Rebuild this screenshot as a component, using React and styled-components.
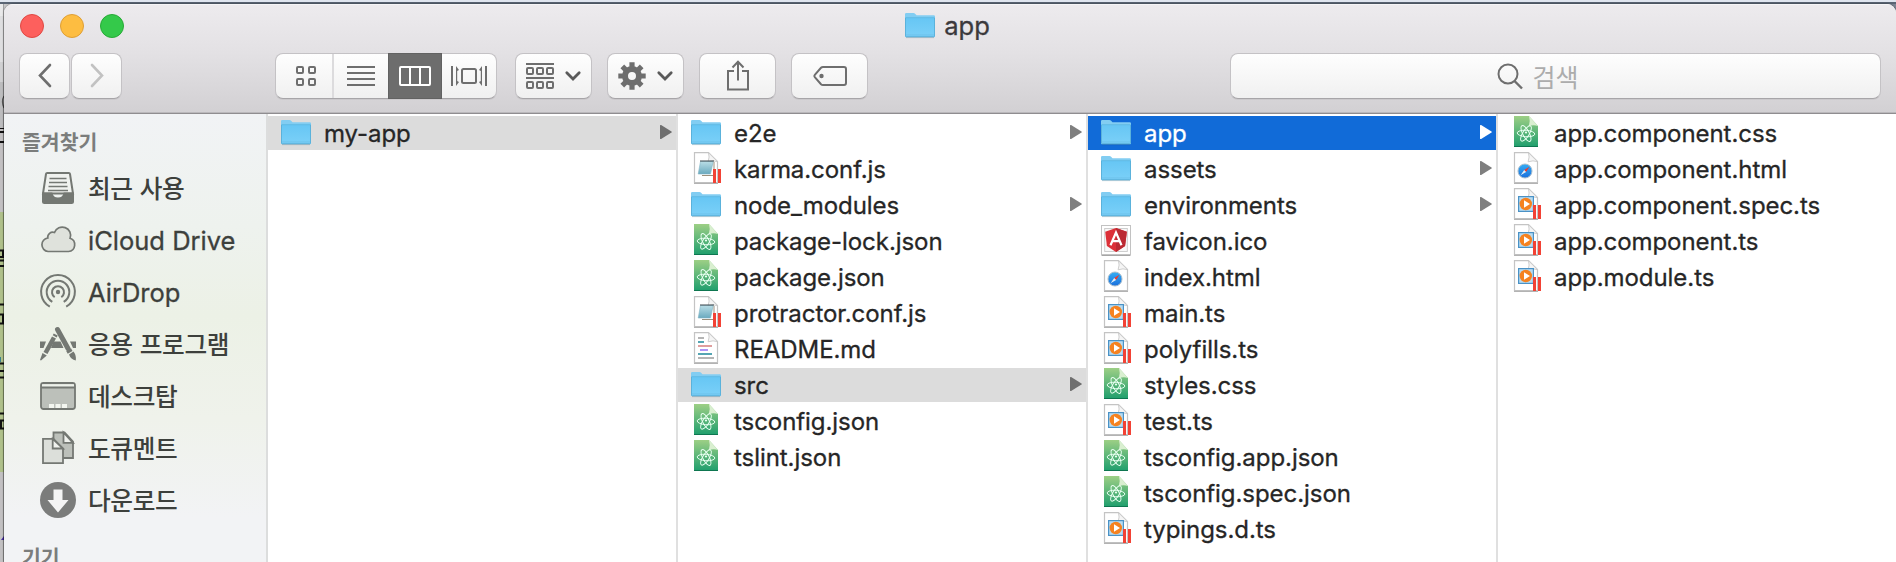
import React from 'react';
import styled, { createGlobalStyle, css } from 'styled-components';

const GlobalStyle = createGlobalStyle`
  *, *::before, *::after { box-sizing: border-box; }
  html, body { margin: 0; height: 100%; overflow: hidden; }
  body { font-family: Inter, "Noto Sans CJK KR", sans-serif; background: #5a6574; }
  #root { height: 100%; }
  svg { display: block; flex: none; overflow: visible; }
`;

const Desktop = styled.div`
  display: flex;
  flex-direction: column;
  height: 562px;
  overflow: hidden;
  background: #5a6574;
`;

const MenuEdge = styled.div`
  flex: none;
  height: 4px;
  background: #dfe5ef;
  border-bottom: 2px solid #5a6574;
`;

const Stage = styled.div`
  display: flex;
  flex: 1;
  min-height: 0;
  background: linear-gradient(to right, #c9c9cb 0 40px, #7b8594 40px);
`;

const Behind = styled.div`
  flex: none;
  width: 4px;
`;

const Window = styled.main`
  display: flex;
  flex: 1;
  flex-direction: column;
  min-width: 0;
  overflow: hidden;
  border-radius: 9px 9px 0 0;
  background: #fff;
  box-shadow: 0 0 2px rgba(0, 0, 0, 0.6);
`;

const Chrome = styled.header`
  display: flex;
  flex-direction: column;
  flex: none;
  height: 110px;
  background: linear-gradient(#edebee, #e3e1e4 45%, #d2d0d3);
  border-bottom: 1px solid #8f8d90;
  box-shadow: inset 0 1px 0 #f6f5f7, inset 0 -1px 0 #bab8bb;
`;

const TitleBar = styled.div`
  display: grid;
  grid-template-columns: 1fr auto 1fr;
  align-items: center;
  height: 49px;
  padding: 0 3px 5px 16px;
`;

const Lights = styled.div`
  display: flex;
  gap: 16px;
`;

const Light = styled.span`
  width: 24px;
  height: 24px;
  border-radius: 50%;
  background: ${(p) => p.$fill};
  border: 1px solid ${(p) => p.$edge};
`;

const Title = styled.h1`
  display: flex;
  align-items: center;
  gap: 9px;
  margin: 0 18px 0 0;
  font-size: 25.6px;
  font-weight: 400;
  line-height: 30px;
  color: #3b393c;
  -webkit-text-stroke: 0.3px;
`;

const Tools = styled.div`
  display: flex;
  height: 46px;
  padding: 0 15px;
`;

const key = css`
  display: flex;
  align-items: center;
  justify-content: center;
  height: 46px;
  border: 1px solid #c4c2c5;
  border-bottom-color: #a7a5a8;
  border-radius: 8px;
  background: linear-gradient(#fefefe, #f0f0f0);
  box-shadow: 0 1px 0 rgba(0, 0, 0, 0.05);
  padding: 0;
`;

const Key = styled.button`
  ${key}
  flex: none;
  width: ${(p) => p.$w}px;
  margin-right: ${(p) => p.$after}px;
  gap: ${(p) => p.$gap || 0}px;
`;

const Segments = styled.div`
  ${key}
  flex: none;
  width: 222px;
  margin-right: 18px;
  align-items: stretch;
  justify-content: flex-start;
`;

const Segment = styled.button`
  display: flex;
  align-items: center;
  justify-content: center;
  width: ${(p) => p.$w}px;
  padding: 0;
  border: 0;
  background: none;
  ${(p) => p.$divided && css`
    padding-left: 4px;
    border-right: 2px solid #dcdbdd;
  `}
  ${(p) => p.$on && css`
    margin: -1px 0;
    background: #6d6d6d;
    box-shadow: inset 0 0 0 1px #626262;
  `}
`;

const Search = styled.div`
  ${key}
  width: 651px;
  margin-left: auto;
  gap: 9px;
  padding-right: 35px;
  font-size: 25px;
  color: #acacac;
`;

const Body = styled.div`
  display: flex;
  flex: 1;
  min-height: 0;
`;

const Sidebar = styled.nav`
  flex: none;
  width: 264px;
  border-right: 2px solid #dcdddd;
  background: linear-gradient(#f1f3f5, #eef2ee 25%, #ecf1e6 45%, #eff2eb 68%, #f2f3f5 90%);
`;

const Heading = styled.h2`
  height: 48px;
  margin: 0;
  padding: ${(p) => (p.$later ? 12 : 9)}px 0 0 18px;
  font: 700 20.5px/36px "Noto Sans CJK KR", sans-serif;
  color: #7b7d7c;
  white-space: nowrap;
`;

const Place = styled.div`
  display: flex;
  align-items: center;
  gap: 12px;
  height: 52px;
  padding-left: 36px;
  white-space: nowrap;
  color: #3d403c;
  font-family: ${(p) => (p.$latin ? 'Inter' : '"Noto Sans CJK KR"')}, sans-serif;
  font-size: ${(p) => (p.$latin ? 25.5 : 24.7)}px;
  font-weight: ${(p) => (p.$latin ? 400 : 500)};
  line-height: 36px;
  ${(p) => (p.$latin ? css`-webkit-text-stroke: 0.3px;` : css`
    letter-spacing: -0.4px;
    word-spacing: 2px;
  `)}
  svg { color: #747873; }
`;

const PlaceName = styled.span`
  padding: ${(p) => (p.$latin ? '2px 0 0' : '0 0 2px')};
`;

const Column = styled.section`
  display: flex;
  flex-direction: column;
  gap: 2px;
  flex: none;
  width: 410px;
  padding-top: 2px;
  border-right: 2px solid #e0e0e0;
  &:last-child { flex: 1; border-right: 0; }
`;

const Row = styled.div`
  display: flex;
  flex: none;
  height: 34px;
  padding: 0 4px 0 13px;
  color: ${(p) => (p.$tone === 'active' ? '#fff' : '#262626')};
  background: ${(p) => ({ active: '#116bd8', trail: '#dcdcdc' }[p.$tone] || 'transparent')};
`;

const FileName = styled.span`
  flex: 1;
  padding: 0 0 0 13px;
  font-size: 24px;
  line-height: 35px;
  letter-spacing: -0.06px;
  white-space: nowrap;
  -webkit-text-stroke: 0.3px;
`;

function Folder() {
  return (
    <svg width="30" height="34" viewBox="0 0 30 34">
      <path d="M1 28.6h28" stroke="#000" strokeOpacity=".22" strokeWidth="1" />
      <path d="M0 5.2Q0 4 1.2 4h7.2q1 0 1.7.8l1.4 1.5h17.2q1.3 0 1.3 1.3V9H0z" fill="#82cdf2" />
      <path d="M0 8.6h30v18.6q0 1-1 1H1q-1 0-1-1z" fill="url(#folderFace)" />
      <path d="M.5 8.7h29" stroke="#60b7df" strokeWidth=".8" />
      <path d="M.5 9v18q0 .7.7.7h27.6q.7 0 .7-.7V9" fill="none" stroke="#58afd8" strokeWidth=".9" />
      <path d="M1 26h28" stroke="#66bbe3" strokeWidth=".6" />
    </svg>
  );
}

function Page() {
  return (
    <>
      <path d="M3.500.6h14l9 9v21h-23z" fill="#fff" stroke="#c4c4c4" strokeWidth="1.200" />
      <path d="M3 31.400h24" stroke="#999" strokeWidth=".8" />
      <path d="M17.500.8q1.400 4-.4 9 5-1.800 9.400-.2z" fill="#f5f5f5" stroke="#c8c8c8" strokeWidth=".9" />
    </>
  );
}

function Bars() {
  return <path d="M22 17h3v14h-3zM27 17h3v14h-3z" fill="#f24235" />;
}

function Atom() {
  return (
    <svg width="30" height="34" viewBox="0 0 30 34">
      <path d="M3 0h15l9 10v21H3z" fill="url(#leaf)" />
      <path d="M3 30.500h24" stroke="#0e7650" strokeWidth="1" />
      <path d="M18 0q1.600 5-.2 10.200 4.800-1.700 9.200-.2z" fill="#d9efd0" />
      <g fill="none" stroke="#e9fff2" strokeWidth=".95">
        <ellipse cx="15" cy="17.500" rx="8.800" ry="3.200" transform="rotate(4 15 17.500)" />
        <ellipse cx="15" cy="17.500" rx="8.800" ry="3.200" transform="rotate(62 15 17.500)" />
        <ellipse cx="15" cy="17.500" rx="8.800" ry="3.200" transform="rotate(-58 15 17.500)" />
      </g>
      <circle cx="15" cy="16.500" r="1.100" fill="#e9fff2" />
    </svg>
  );
}

function Script() {
  return (
    <svg width="30" height="34" viewBox="0 0 30 34">
      <Page />
      <path d="M11 23.500h12V10" fill="none" stroke="#9b8f7c" strokeWidth="1" />
      <path d="M9.500 9.500h12.700L19.500 22H7.200z" fill="url(#pad)" stroke="#7fb3c4" strokeWidth=".6" />
      <path d="M9.500 9h13" stroke="#38454a" strokeWidth="2" strokeDasharray="1 1" />
      <Bars />
    </svg>
  );
}

function Media() {
  return (
    <svg width="30" height="34" viewBox="0 0 30 34">
      <Page />
      <rect x="7.600" y="8.600" width="14.800" height="14.800" fill="#b7dcf3" stroke="#4a92c6" strokeWidth="1.200" />
      <circle cx="14.800" cy="16" r="6.200" fill="#f58220" />
      <path d="M13 12.200l6 3.800-6 3.800z" fill="#fff" />
      <Bars />
    </svg>
  );
}

function Web() {
  return (
    <svg width="30" height="34" viewBox="0 0 30 34">
      <Page />
      <circle cx="14" cy="19" r="7" fill="url(#sea)" stroke="#a9bccb" strokeWidth="1" />
      <path d="M18.400 14.800l-3.300 5.200-1.900-1.900z" fill="#f0392c" />
      <path d="M9.600 23.200l3.600-5.100 1.900 1.900z" fill="#e6eef5" />
    </svg>
  );
}

function Shield() {
  return (
    <svg width="30" height="34" viewBox="0 0 30 34">
      <path d="M.5 31.300h29" stroke="#000" strokeOpacity=".35" strokeWidth="1.400" />
      <rect x=".5" y="1.500" width="29" height="29" fill="#fff" stroke="#c2c2c2" />
      <rect x="3.700" y="4.500" width="22.600" height="23" fill="#f8f8f8" stroke="#c9c9c9" strokeWidth=".9" />
      <path d="M15 4l10.800 3.700-1.700 14.400L15 28l-9.100-5.900L4.200 7.700z" fill="#dc3038" />
      <path d="M15 4l10.800 3.700-1.700 14.400L15 28z" fill="#bb2a33" />
      <path d="M9.500 21.300L15 8.500l5.500 12.800M11.700 17.200h6.600" fill="none" stroke="#fff" strokeWidth="2.200" />
    </svg>
  );
}

function Markdown() {
  return (
    <svg width="30" height="34" viewBox="0 0 30 34">
      <Page />
      <g strokeWidth="1.800" fill="none">
        <path d="M7 6h6M7 26h16" stroke="#b4b4b4" />
        <path d="M7 10h6M7 22h14" stroke="#55a5b3" />
        <path d="M7 14h14" stroke="#dc9494" />
        <path d="M9 18h8" stroke="#a688f5" />
      </g>
    </svg>
  );
}

function Ramp({ id, from, to }) {
  return (
    <linearGradient id={id} x1="0" y1="0" x2="0" y2="1">
      <stop offset="0" stopColor={from} />
      <stop offset="1" stopColor={to} />
    </linearGradient>
  );
}

const fileIcons = { folder: Folder, atom: Atom, js: Script, ts: Media, html: Web, ico: Shield, md: Markdown };

function Arrow({ tone }) {
  const fill = { active: '#fff', trail: '#6f6f6f' }[tone] || '#7f7f7f';
  return (
    <svg width="12" height="34" viewBox="0 0 12 34">
      <path d="M0 9.800Q0 8.600 1.100 9.100L11.500 15.500Q12.300 16 11.500 16.500L1.100 22.900Q0 23.400 0 22.200z" fill={fill} />
    </svg>
  );
}

const columns = [
  [['folder', 'my-app', 'trail']],
  [
    ['folder', 'e2e'], ['js', 'karma.conf.js'], ['folder', 'node_modules'], ['atom', 'package-lock.json'],
    ['atom', 'package.json'], ['js', 'protractor.conf.js'], ['md', 'README.md'], ['folder', 'src', 'trail'],
    ['atom', 'tsconfig.json'], ['atom', 'tslint.json'],
  ],
  [
    ['folder', 'app', 'active'], ['folder', 'assets'], ['folder', 'environments'], ['ico', 'favicon.ico'],
    ['html', 'index.html'], ['ts', 'main.ts'], ['ts', 'polyfills.ts'], ['atom', 'styles.css'], ['ts', 'test.ts'],
    ['atom', 'tsconfig.app.json'], ['atom', 'tsconfig.spec.json'], ['ts', 'typings.d.ts'],
  ],
  [
    ['atom', 'app.component.css'], ['html', 'app.component.html'], ['ts', 'app.component.spec.ts'],
    ['ts', 'app.component.ts'], ['ts', 'app.module.ts'],
  ],
];

const Icon36 = ({ children }) => (
  <svg width="36" height="36" viewBox="0 0 36 36" fill="none" stroke="currentColor" strokeWidth="2">{children}</svg>
);

const places = [
  ['최근 사용', (
    <Icon36>
      <path d="M7.200 3h21.600q1 0 1.200 1l3 19.500H3L6 4q.2-1 1.200-1z" fill="#f0f2ef" />
      <path d="M9.500 8.500h17M9 12.500h18M8.500 16.500h19M8 20.500h20" strokeWidth="1.500" />
      <path d="M3 23.500h8.500q1 5 6.500 5t6.500-5H33v8q0 1.500-1.500 1.500h-27Q3 33 3 31.500z" fill="currentColor" />
    </Icon36>
  )],
  ['iCloud Drive', (
    <Icon36>
      <path d="M8 29.500h20.500a6.800 6.800 0 0 0 1.600-13.200A8.200 8.200 0 0 0 14.500 10.500 5 5 0 0 0 7.800 16 6.800 6.800 0 0 0 8 29.500z" fill="#dfe2dc" strokeWidth="1.700" />
    </Icon36>
  ), true],
  ['AirDrop', (
    <Icon36>
      <circle cx="18" cy="18" r="2.200" fill="currentColor" stroke="none" />
      <path d="M14.700 23.200a6 6 0 1 1 6.600 0" />
      <path d="M12.300 27.800a11.300 11.300 0 1 1 11.400 0" />
      <path d="M9.800 32.600a16.900 16.900 0 1 1 16.400 0" />
    </Icon36>
  ), true],
  ['응용 프로그램', (
    <Icon36>
      <path d="M0 15.500h6L3.500 22H0zM13.500 15.500h7L23.500 22H11zM30 15.500h6V22h-3z" fill="currentColor" stroke="none" />
      <path d="M17.500 3.500L28 22.500" strokeWidth="5" strokeLinecap="round" />
      <path d="M28.600 23.700l1.500 2.700" strokeWidth="5.500" />
      <path d="M29 28.500l4.500-3q3 4 2.300 9-5-.8-6.800-6z" fill="currentColor" stroke="none" />
      <path d="M14 11.500L5.500 27" strokeWidth="4.500" />
      <path d="M15.700 8.500l-1 1.800" strokeWidth="4.500" />
      <path d="M2.500 27l4.300 2.500L1 34.500 0 34z" fill="currentColor" stroke="none" />
    </Icon36>
  )],
  ['데스크탑', (
    <Icon36>
      <rect x="1" y="5" width="34" height="26" rx="2.500" fill="#bcc0ba" strokeWidth="1.800" />
      <path d="M2 6.200h32v3H2z" fill="#edf1ea" stroke="none" />
      <path d="M1 9.500h34" strokeWidth="1.800" />
      <path d="M9 26h5v4H9zM15.500 26h5v4h-5zM22 26h5v4h-5z" fill="#f3f6f0" stroke="none" />
    </Icon36>
  )],
  ['도큐멘트', (
    <Icon36>
      <path d="M13.500 2.500h11l8.500 9v16.500H13.500z" fill="#bcc0ba" strokeWidth="1.800" />
      <path d="M23.500 2.500v10.300H33z" fill="#f0f2ee" strokeWidth="1.800" />
      <path d="M3 8.800h10.500l9.500 9.700v14.700H3z" fill="#dcdfda" strokeWidth="1.800" />
      <path d="M12.700 8.800v9.700H23z" fill="#f0f2ee" strokeWidth="1.800" />
    </Icon36>
  )],
  ['다운로드', (
    <Icon36>
      <circle cx="18" cy="18" r="18" fill="#7b7c7b" stroke="none" />
      <path d="M13.500 7.500h9v10.500h6L18 30.500 7.500 18h6z" fill="#f4f4f4" stroke="none" />
    </Icon36>
  )],
];

const Glyph = ({ w, h = 32, children, ...rest }) => (
  <svg width={w} height={h} viewBox={`0 0 ${w} ${h}`} fill="none" stroke="#6e6e6e" strokeWidth="2" {...rest}>{children}</svg>
);

const Caret = () => (
  <Glyph w={16} strokeWidth={2.8} stroke="#5a5a5a" strokeLinecap="round">
    <path d="M1.800 12.800L8 19l6.200-6.200" />
  </Glyph>
);

function Toolbar() {
  return (
    <Tools>
      <Key $w={51} $after={1}>
        <Glyph w={16} strokeWidth={2.6} strokeLinecap="round"><path d="M13 5L3 15.500 13 26" /></Glyph>
      </Key>
      <Key $w={51} $after={153}>
        <Glyph w={16} stroke="#c2c2c2" strokeWidth={2.6} strokeLinecap="round"><path d="M3 5l10 10.500L3 26" /></Glyph>
      </Key>
      <Segments>
        <Segment $w={58} $divided>
          <Glyph w={20}>
            {[[1, 7], [13, 7], [1, 19], [13, 19]].map(([x, y]) => <rect key={`${x}-${y}`} x={x} y={y} width="6" height="6" rx="1" />)}
          </Glyph>
        </Segment>
        <Segment $w={54}>
          <Glyph w={28}><path d="M0 7h28M0 13h28M0 19h28M0 25h28" /></Glyph>
        </Segment>
        <Segment $w={54} $on>
          <Glyph w={32} stroke="#fff"><rect x="1" y="7" width="30" height="18" rx="1" /><path d="M11 7v18M21 7v18" /></Glyph>
        </Segment>
        <Segment $w={54}>
          <Glyph w={36}>
            <rect x="11" y="9" width="14" height="14" rx="1.500" />
            <path d="M1 6v20M35 6v20" />
            <path d="M5 6l3 4-1.800 1v10L8 22l-3 4zM31 6l-3 4 1.800 1v10L28 22l3 4z" fill="#6e6e6e" stroke="none" />
          </Glyph>
        </Segment>
      </Segments>
      <Key $w={77} $after={15} $gap={11}>
        <Glyph w={28}>
          <path d="M0 4h28M0 18h28" />
          {[1, 11, 21].map((x) => (
            <React.Fragment key={x}>
              <rect x={x} y="8" width="6" height="6" rx="1" />
              <rect x={x} y="22" width="6" height="6" rx="1" />
            </React.Fragment>
          ))}
        </Glyph>
        <Caret />
      </Key>
      <Key $w={77} $after={15} $gap={11}>
        <Glyph w={28} stroke="none">
          <path
            fill="#6e6e6e"
            fillRule="evenodd"
            d="M14 6a10 10 0 1 0 0 20 10 10 0 0 0 0-20zM14 12a4 4 0 1 1 0 8 4 4 0 0 1 0-8z"
          />
          {[0, 45, 90, 135, 180, 225, 270, 315].map((a) => (
            <path key={a} d="M11.400 2.300h5.200v6h-5.200z" fill="#6e6e6e" transform={`rotate(${a} 14 16)`} />
          ))}
        </Glyph>
        <Caret />
      </Key>
      <Key $w={77} $after={15}>
        <Glyph w={24}><path d="M8 11H2v18.500h20V11h-6M12 20.500V1.500M6.500 7.500L12 1.800l5.500 5.700" /></Glyph>
      </Key>
      <Key $w={77} $after={15}>
        <Glyph w={34}>
          <path d="M10 7h21q2 0 2 2v14q0 2-2 2H10q-1.200 0-2-.8L1.800 17.200q-1-1.200 0-2.400L8 7.800q.8-.8 2-.8z" />
          <circle cx="8.500" cy="16" r="2.200" fill="#6e6e6e" stroke="none" />
        </Glyph>
      </Key>
      <Search>
        <Glyph w={26}><circle cx="11" cy="14" r="9.500" /><path d="M17.500 21l7.500 7.500" strokeWidth="2.400" /></Glyph>
        검색
      </Search>
    </Tools>
  );
}

function DocumentEdge() {
  return (
    <svg width="4" height="558" viewBox="0 4 4 558">
      <defs>
        <Ramp id="folderFace" from="#66c6f4" to="#7bd0f8" />
        <Ramp id="leaf" from="#9dcf85" to="#1e9e6d" />
        <Ramp id="pad" from="#b9dde6" to="#6aaabf" />
        <Ramp id="sea" from="#35aef5" to="#1a6fdc" />
      </defs>
      <path d="M0 4h4v12H0z" fill="#e9e9ea" />
      <path d="M0 16h4v46H0z" fill="#dedee0" />
      <path d="M0 62h4v20H0z" fill="#d0d0d2" />
      <path d="M0 82h4v46H0z" fill="#bcbcbe" />
      <path d="M0 128h4v84H0z" fill="#c2c0c2" />
      <path d="M0 212h4v260H0z" fill="#afc08a" />
      <path d="M0 472h4v90H0z" fill="#c2c0c2" />
      <path d="M4 96q-3 5 0 12" fill="none" stroke="#555" strokeWidth="1.200" />
      <path d="M0 128.500h4" stroke="#111" strokeWidth="1" />
      <path d="M0 132h4M0 142h4M0 260.500h4M0 266h4M0 304.500h4M0 363.500h4M0 371h4M0 377.500h4M0 413.500h4" stroke="#111" strokeWidth="2" />
      <path d="M0 250.500h3V257H0M0 314.500h3v9H0M4 420.500H1v8h3" fill="none" stroke="#111" strokeWidth="2" />
      <path d="M0 357h1v5H0z" fill="#38808a" />
      <path d="M1 540l3-4v4z" fill="#4930a8" />
      <path d="M3.500 4v558" stroke="#000" strokeOpacity=".3" />
    </svg>
  );
}

export default function App() {
  return (
    <Desktop>
      <GlobalStyle />
      <MenuEdge />
      <Stage>
        <Behind><DocumentEdge /></Behind>
        <Window>
          <Chrome>
            <TitleBar>
              <Lights>
                <Light $fill="#fd605d" $edge="#e04843" />
                <Light $fill="#fdbd41" $edge="#df9f35" />
                <Light $fill="#34c94a" $edge="#27aa36" />
              </Lights>
              <Title>
                <Folder />
                app
              </Title>
            </TitleBar>
            <Toolbar />
          </Chrome>
          <Body>
            <Sidebar>
              <Heading>즐겨찾기</Heading>
              {places.map(([name, icon, latin]) => (
                <Place key={name} $latin={latin}>
                  {icon}
                  <PlaceName $latin={latin}>{name}</PlaceName>
                </Place>
              ))}
              <Heading $later>기기</Heading>
            </Sidebar>
            {columns.map((rows, i) => (
              <Column key={i}>
                {rows.map(([kind, name, tone]) => {
                  const Icon = fileIcons[kind];
                  return (
                    <Row key={name} $tone={tone}>
                      <Icon />
                      <FileName>{name}</FileName>
                      {kind === 'folder' && <Arrow tone={tone} />}
                    </Row>
                  );
                })}
              </Column>
            ))}
          </Body>
        </Window>
      </Stage>
    </Desktop>
  );
}
